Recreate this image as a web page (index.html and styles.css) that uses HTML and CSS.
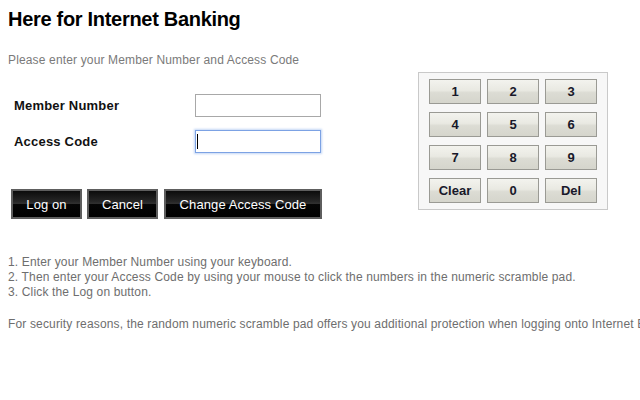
FILE: index.html
```html
<!DOCTYPE html>
<html lang="en">

<head>
    <meta charset="UTF-8">
    <meta name="viewport" content="width=device-width, initial-scale=1.0">
    <title>Internet Banking</title>
    <link rel="stylesheet" href="styles.css">
</head>

<body>
    <h1 class="title">Here for Internet Banking</h1>
    <p class="intro">Please enter your Member Number and Access Code</p>

    <div class="login">
        <div class="left">
            <form id="form" class="form">
                <div class="row">
                    <label for="member">Member Number</label>
                    <input type="text" name="member" id="member">
                </div>
                <div class="row">
                    <label for="code">Access Code</label>
                    <span class="caret-wrap"><input type="password" name="code" id="code" class="active"></span>
                </div>
            </form>
            <div class="actions">
                <button type="button" class="btn btn-logon">Log on</button>
                <button type="button" class="btn btn-cancel">Cancel</button>
                <button type="button" class="btn btn-change">Change Access Code</button>
            </div>
        </div>

        <div class="keypad">
            <button type="button" class="key">1</button>
            <button type="button" class="key">2</button>
            <button type="button" class="key">3</button>
            <button type="button" class="key">4</button>
            <button type="button" class="key">5</button>
            <button type="button" class="key">6</button>
            <button type="button" class="key">7</button>
            <button type="button" class="key">8</button>
            <button type="button" class="key">9</button>
            <button type="button" class="key">Clear</button>
            <button type="button" class="key">0</button>
            <button type="button" class="key">Del</button>
        </div>
    </div>

    <div class="steps">
        <p>1. Enter your Member Number using your keyboard.</p>
        <p>2. Then enter your Access Code by using your mouse to click the numbers in the numeric scramble pad.</p>
        <p>3. Click the Log on button.</p>
    </div>

    <p class="security">For security reasons, the random numeric scramble pad offers you additional protection when logging onto Internet Banking.</p>
</body>

</html>
```

FILE: styles.css
```css
* {
    margin: 0;
    padding: 0;
    box-sizing: border-box;
}

html,
body {
    overflow: hidden;
}

body {
    background: #fff;
    padding: 8px 8px 0;
    font-family: 'Liberation Sans', Arial, sans-serif;
    color: #000;
}

.title {
    font-size: 20px;
    line-height: 23px;
    font-weight: bold;
    letter-spacing: -0.3px;
}

.intro {
    margin-top: 22px;
    font-size: 12px;
    line-height: 14px;
    color: #7a7a7a;
    letter-spacing: 0.15px;
}

.login {
    display: flex;
    align-items: flex-start;
}

.left {
    width: 410px;
}

.form {
    margin-top: 27px;
    padding-left: 6px;
}

.row {
    display: flex;
    align-items: center;
    height: 23px;
}

.row + .row {
    margin-top: 13px;
}

.row label {
    width: 181px;
    font-size: 13px;
    font-weight: bold;
    color: #111;
    letter-spacing: 0.2px;
}

.row input {
    display: block;
    width: 126px;
    height: 23px;
    border: 1px solid #a8a8a8;
    background: #fff;
    outline: none;
    font-family: inherit;
}

.row input.active {
    border-color: #7ca2e4;
    box-shadow: 0 0 2px 1px #c3d6f5;
}

.caret-wrap {
    position: relative;
    display: block;
}

.caret-wrap::after {
    content: "";
    position: absolute;
    left: 2px;
    top: 4px;
    width: 1px;
    height: 15px;
    background: #000;
}

.actions {
    display: flex;
    margin-top: 36px;
    padding-left: 3px;
}

.btn {
    height: 30px;
    border: 2px solid #5e5e5e;
    background: linear-gradient(#0c0c0c 0%, #262626 40%, #303030 48%, #050505 52%, #000 100%);
    color: #fff;
    font-family: inherit;
    font-size: 13px;
    letter-spacing: 0.1px;
    cursor: pointer;
}

.btn-logon {
    width: 71px;
}

.btn-cancel {
    width: 71px;
    margin-left: 5px;
}

.btn-change {
    width: 158px;
    margin-left: 6px;
}

.keypad {
    margin-top: 5px;
    display: grid;
    grid-template-columns: repeat(3, 52px);
    grid-auto-rows: 25px;
    column-gap: 6px;
    row-gap: 8px;
    padding: 6px 10px 6px;
    border: 1px solid #c9c9c9;
    background: #f7f7f7;
}

.key {
    border: 1px solid #9a9a94;
    background: linear-gradient(#f3f3ee 0%, #e9e9e2 45%, #dcdcd4 55%, #d5d5cc 100%);
    color: #18182a;
    font-family: inherit;
    font-size: 13px;
    font-weight: bold;
    cursor: pointer;
}

.steps {
    margin-top: 36px;
    font-size: 12px;
    line-height: 15px;
    color: #6e6e6e;
    letter-spacing: 0.15px;
}

.security {
    margin-top: 17px;
    font-size: 12px;
    line-height: 15px;
    color: #6e6e6e;
    letter-spacing: 0.15px;
    white-space: nowrap;
}
```
